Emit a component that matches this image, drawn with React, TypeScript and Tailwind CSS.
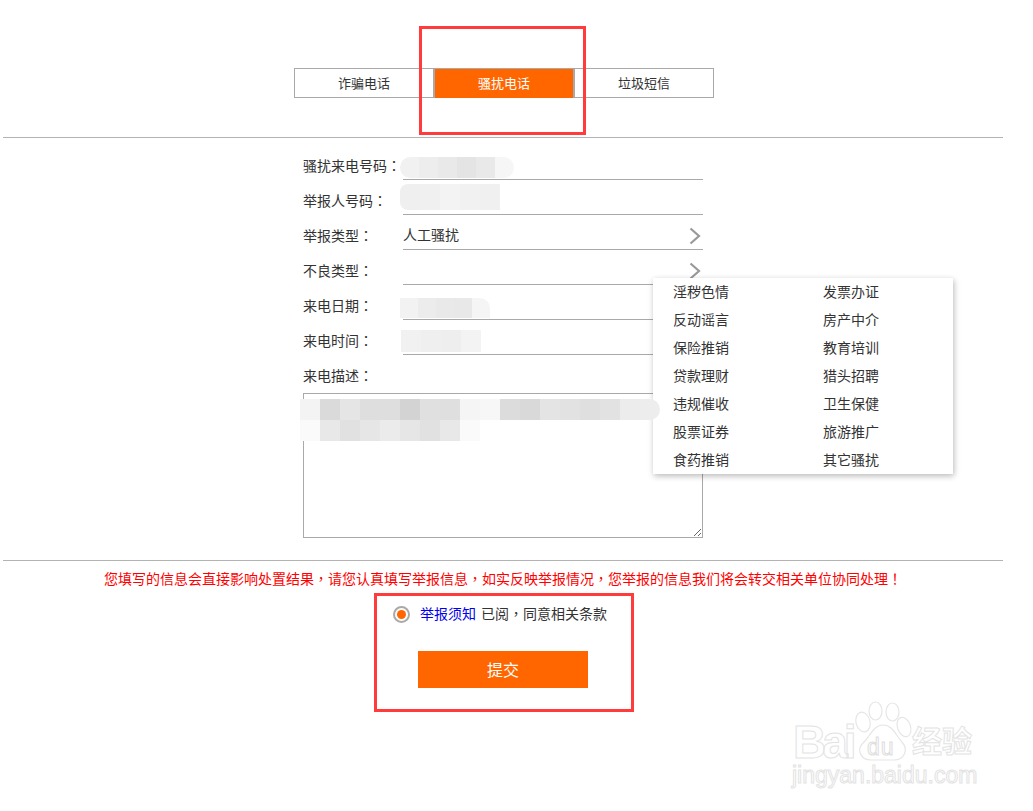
import React from 'react';

const fontStack = 'font-["Liberation_Sans","Noto_Sans_CJK_SC",sans-serif]';

const fields = [
  { label: '骚扰来电号码', value: '', arrow: false },
  { label: '举报人号码', value: '', arrow: false },
  { label: '举报类型', value: '人工骚扰', arrow: true },
  { label: '不良类型', value: '', arrow: true },
  { label: '来电日期', value: '', arrow: false },
  { label: '来电时间', value: '', arrow: false },
];

const badTypes = [
  '淫秽色情', '发票办证',
  '反动谣言', '房产中介',
  '保险推销', '教育培训',
  '贷款理财', '猎头招聘',
  '违规催收', '卫生保健',
  '股票证券', '旅游推广',
  '食药推销', '其它骚扰',
];

// the reference centres its full-width punctuation in the cell, the TC cut does too
const Pn = ({ children }: { children: string }) => (
  <span className='font-["Noto_Sans_CJK_TC",sans-serif] leading-[0]'>{children}</span>
);

const Chevron = () => (
  <svg width="14" height="18" viewBox="0 0 14 18" fill="none" className="mr-[1px] mt-[5px]">
    <path d="M2.5 1.5 L11 9 L2.5 16.5" stroke="#999999" strokeWidth="2.2" />
  </svg>
);

// pixelated privacy patches from the screenshot
const Mosaic = ({ className, rows, cell }: { className: string; rows: string[][]; cell: string }) => (
  <div className={`absolute flex flex-col ${className}`}>
    {rows.map((row, i) => (
      <div key={i} className="flex">
        {row.map((c, j) => (
          <div key={j} className={`${cell} ${c}`} />
        ))}
      </div>
    ))}
  </div>
);

const Watermark = () => (
  <div className={`absolute left-[790px] top-[700px] w-[190px] h-[92px] select-none ${fontStack}`}>
    <svg width="66" height="62" viewBox="0 0 66 62" fill="#fff" stroke="#e6e6e6" strokeWidth="1.2" className="absolute left-[62px] top-[0px]">
      <ellipse cx="11" cy="22" rx="7" ry="10" transform="rotate(-15 11 22)" />
      <ellipse cx="23.5" cy="11" rx="6.5" ry="9" />
      <ellipse cx="40.5" cy="12" rx="6.5" ry="9" />
      <ellipse cx="52" cy="27" rx="6.5" ry="10" transform="rotate(-20 52 27)" />
      <path d="M31 25 C41 25 44 36 50 42 C57 50 52 60 42 60 L19 60 C9 60 4 50 11 43 C18 37 21 25 31 25 Z" />
    </svg>
    <span className="absolute left-[3px] top-[23px] text-[46px] leading-[38px] font-bold tracking-[-4px] text-white [-webkit-text-stroke:1px_#e3e3e3]">Bai</span>
    <span className="absolute left-[77px] top-[35px] text-[23px] leading-[25px] tracking-[1px] text-white [-webkit-text-stroke:1px_#dedede]">du</span>
    <span className="absolute left-[122px] top-[24px] text-[30px] leading-[36px] font-bold text-white [-webkit-text-stroke:1px_#e3e3e3]">经验</span>
    <span className="absolute left-[2px] top-[61px] text-[23px] leading-[28px] text-white [-webkit-text-stroke:1px_#e3e3e3]">jingyan.baidu.com</span>
  </div>
);

export default function App() {
  return (
    <div className={`relative w-[1033px] h-[811px] bg-white overflow-hidden text-[14px] text-[#333] ${fontStack}`}>
      <div className="w-[1000px] ml-[3px] pt-[68px]">
        <div className="flex w-[420px] h-[30px] ml-[291px] border border-[#a9a9a9] text-[13px]">
          <div className="w-[138px] text-center leading-[30px]">诈骗电话</div>
          <div className="w-[142px] h-[29px] bg-[#ff6600] border-x-2 border-[#a9a9a9] text-white text-center leading-[30px]">骚扰电话</div>
          <div className="flex-1 text-center leading-[30px]">垃圾短信</div>
        </div>

        <div className="mt-[39px] h-px bg-[#b3b3b3]" />

        <div className="w-[400px] ml-[300px] mt-[7px]">
          {fields.map((f) => (
            <div key={f.label} className="flex h-[35px]">
              <div className="w-[100px] pt-[7px] leading-[28px] whitespace-nowrap">{f.label}<Pn>：</Pn></div>
              <div className="flex flex-1 justify-between border-b border-[#a9a9a9] pt-[7px] leading-[27px]">
                <span>{f.value}</span>
                {f.arrow && <Chevron />}
              </div>
            </div>
          ))}
          <div className="h-[35px] pt-[7px] leading-[28px]">来电描述<Pn>：</Pn></div>
          <textarea
            readOnly
            className="block mt-[3px] w-[400px] h-[145px] border border-[#a9a9a9] outline-none"
          />
        </div>

        <div className="mt-[22px] h-px bg-[#b3b3b3]" />

        <p className="mt-[8px] text-center text-[#ff0000] leading-[20px] whitespace-nowrap">
          您填写的信息会直接影响处置结果<Pn>，</Pn>请您认真填写举报信息<Pn>，</Pn>如实反映举报情况<Pn>，</Pn>您举报的信息我们将会转交相关单位协同处理<Pn>！</Pn>
        </p>

        <div className="flex items-center ml-[390px] mt-[15px] h-[20px]">
          <span className="flex items-center justify-center w-[17px] h-[17px] rounded-full border-2 border-[#a9a9a9]">
            <span className="w-[9px] h-[9px] rounded-full bg-[#ff6600]" />
          </span>
          <span className="ml-[10px] text-[#0000ee]">举报须知</span>
          <span className="ml-[5px]">已阅<Pn>，</Pn>同意相关条款</span>
        </div>

        <button className="block ml-[415px] mt-[27px] w-[170px] h-[37px] pt-[2px] bg-[#ff6600] text-white text-[16px]">提交</button>
      </div>

      {/* dropdown for 不良类型 */}
      <div className="absolute left-[653px] top-[278px] w-[300px] h-[196px] bg-white shadow-[1px_2px_6px_rgba(0,0,0,0.28)] grid grid-cols-[150px_1fr] auto-rows-[28px] pl-[20px]">
        {badTypes.map((t) => (
          <div key={t} className="leading-[28px]">{t}</div>
        ))}
      </div>

      <Mosaic
        className="left-[400px] top-[157px] rounded-full overflow-hidden"
        cell="w-[19px] h-[21px]"
        rows={[['bg-[#f1f1f1]', 'bg-[#ededed]', 'bg-[#e9e9e9]', 'bg-[#e4e4e4]', 'bg-[#e9e9e9]', 'bg-[#f6f6f6]']]}
      />
      <Mosaic
        className="left-[400px] top-[184px] rounded-l-[8px] overflow-hidden"
        cell="w-[20px] h-[26px]"
        rows={[['bg-[#efefef]', 'bg-[#f0f0f0]', 'bg-[#f3f3f3]', 'bg-[#f1f1f1]', 'bg-[#f0f0f0]']]}
      />
      <Mosaic
        className="left-[400px] top-[298px] rounded-tr-[10px] overflow-hidden"
        cell="w-[18px] h-[20px]"
        rows={[['bg-[#f2f2f2]', 'bg-[#ececec]', 'bg-[#e9e9e9]', 'bg-[#e8e8e8]', 'bg-[#f5f5f5]']]}
      />
      <Mosaic
        className="left-[401px] top-[330px]"
        cell="w-[20px] h-[22px]"
        rows={[['bg-[#f1f1f1]', 'bg-[#efefef]', 'bg-[#eeeeee]', 'bg-[#f3f3f3]']]}
      />
      <Mosaic
        className="left-[300px] top-[399px]"
        cell="w-[20px] h-[21px]"
        rows={[
          ['bg-[#f3f3f3]', 'bg-[#dadada]', 'bg-[#e5e5e5]', 'bg-[#dedede]', 'bg-[#dedede]', 'bg-[#d3d3d3]', 'bg-[#e0e0e0]', 'bg-[#dfdfdf]', 'bg-[#f5f5f5]', 'bg-[#f7f7f7]', 'bg-[#dcdcdc]', 'bg-[#d9d9d9]', 'bg-[#e4e4e4]', 'bg-[#e2e2e2]', 'bg-[#dfdfdf]', 'bg-[#e2e2e2]', 'bg-[#ececec]', 'bg-[#ededed] rounded-r-full'],
          ['bg-[#fafafa]', 'bg-[#e8e8e8]', 'bg-[#e1e1e1]', 'bg-[#e6e6e6]', 'bg-[#ebebeb]', 'bg-[#e6e6e6]', 'bg-[#e1e1e1]', 'bg-[#e8e8e8]', 'bg-[#fafafa]'],
        ]}
      />

      {/* red annotation boxes */}
      <div className="absolute left-[419px] top-[26px] w-[167px] h-[109px] border-[3px] border-[#ff3b3b]" />
      <div className="absolute left-[374px] top-[593px] w-[260px] h-[119px] border-[3px] border-[#ff3b3b]" />

      <Watermark />
    </div>
  );
}
